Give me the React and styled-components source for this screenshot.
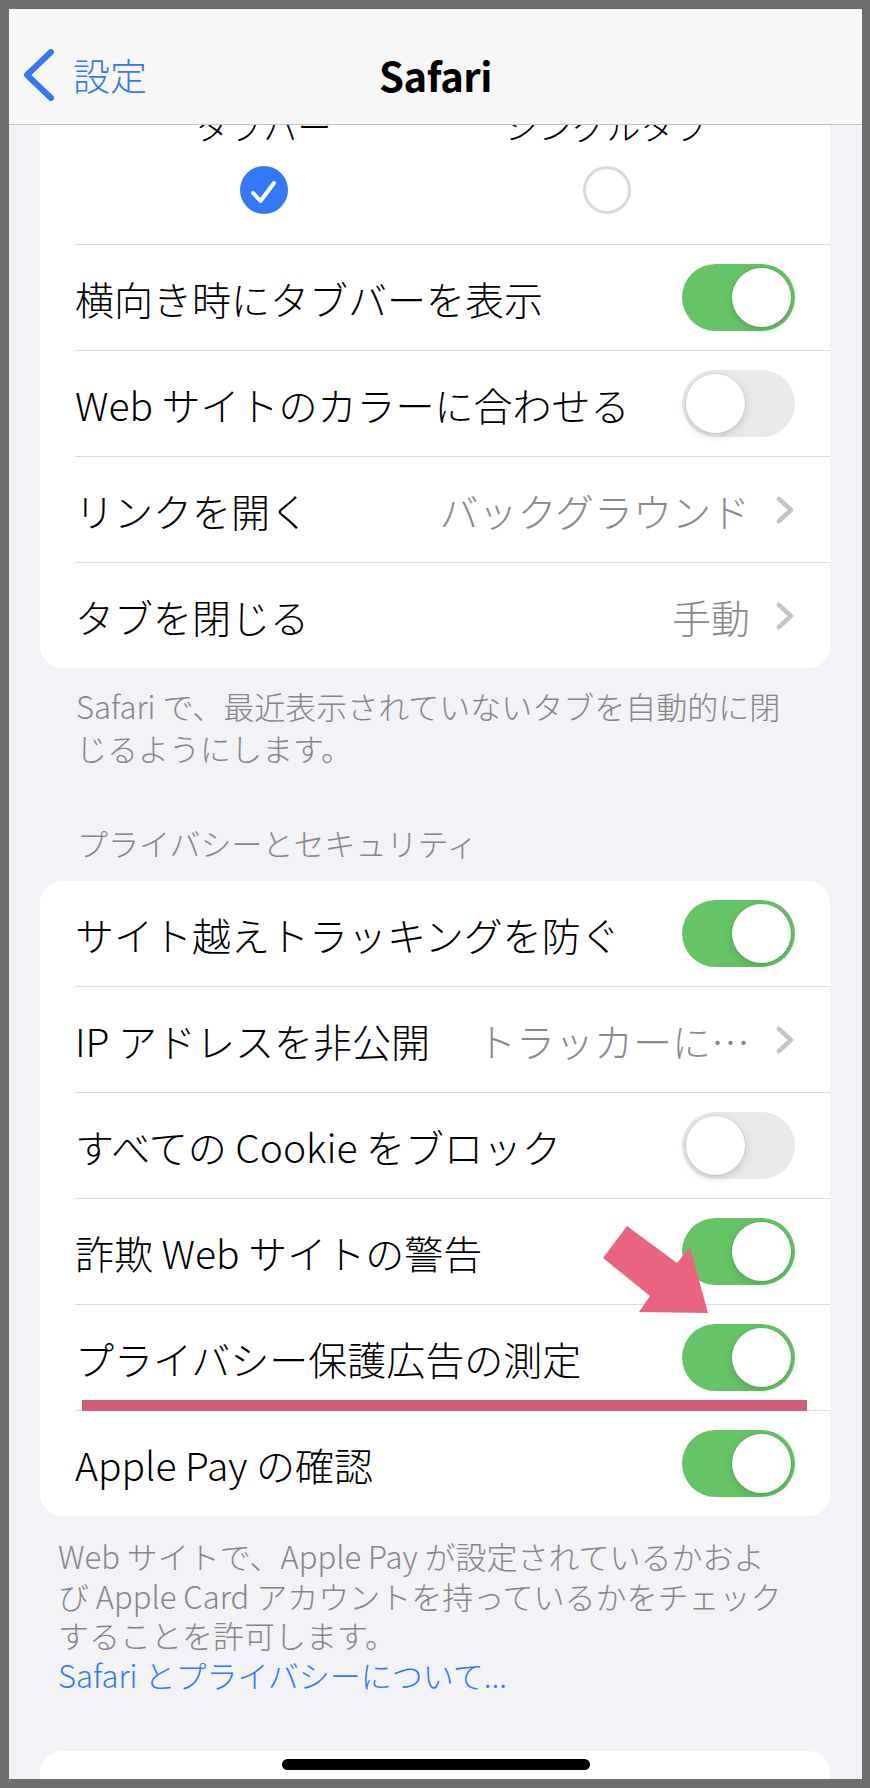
import React from "react";
import styled, { createGlobalStyle } from "styled-components";

const GlobalStyle = createGlobalStyle`
  body {
    margin: 0;
    font-family: "Noto Sans CJK JP", "Noto Sans", sans-serif;
    font-weight: 300;
  }
`;

const Frame = styled.div`
  background: #6d6d6d;
  padding: 9px 8px 9px 9px;
  height: 1788px;
  box-sizing: border-box;
`;

const Screen = styled.div`
  position: relative;
  height: 1770px;
  overflow: hidden;
  background: #f2f2f7;
`;

const NavBar = styled.div`
  height: 116px;
  box-sizing: border-box;
  padding-top: 16px;
  background: #f7f7f7;
  border-bottom: 1px solid #c4c4c7;
  display: grid;
  grid-template-columns: 1fr auto 1fr;
  align-items: center;
`;

const BackButton = styled.div`
  display: flex;
  align-items: center;
  gap: 18px;
  padding-left: 12px;
  color: #3478f6;
  font-size: 37px;
`;

const Title = styled.div`
  font-size: 40px;
  font-weight: 700;
  color: #000;
  letter-spacing: -0.5px;
`;

const Content = styled.div`
  padding: 0 32px 0 31px;
`;

const Card = styled.div`
  position: relative;
  background: #fff;
  border-radius: ${(p) => (p.$clipped ? "0 0 22px 22px" : "22px")};
  overflow: ${(p) => (p.$clipped ? "hidden" : "visible")};
  margin-top: ${(p) => p.$top || 0}px;
`;

const Picker = styled.div`
  display: flex;
  justify-content: center;
  gap: 103px;
  padding-bottom: 30px;
`;

const PickerOption = styled.div`
  width: 240px;
  display: flex;
  flex-direction: column;
  align-items: center;
  gap: 21px;
`;

const PickerLabel = styled.div`
  margin-top: -19px;
  font-size: 34px;
  line-height: 39px;
  color: #000;
  white-space: nowrap;
`;

const Radio = styled.div`
  width: 48px;
  height: 48px;
  border-radius: 50%;
  box-sizing: border-box;
  background: ${(p) => (p.$checked ? "#3478f6" : "#fff")};
  border: ${(p) => (p.$checked ? "none" : "3px solid #dadadd")};
  display: flex;
  align-items: center;
  justify-content: center;
`;

const Row = styled.div`
  height: ${(p) => (p.$first ? 105 : 106)}px;
  box-sizing: border-box;
  margin-left: 35px;
  padding-right: 35px;
  border-top: ${(p) => (p.$first ? "none" : "1px solid #dcdce0")};
  display: flex;
  align-items: center;
  justify-content: space-between;
`;

const Label = styled.div`
  font-size: 39px;
  line-height: 46px;
  color: #000;
  white-space: nowrap;
`;

const Value = styled.div`
  display: flex;
  align-items: center;
  gap: 26px;
  font-size: 39px;
  line-height: 46px;
  color: #8a8a8e;
  white-space: nowrap;
`;

const Track = styled.div`
  width: 113px;
  height: 67px;
  border-radius: 34px;
  background: ${(p) => (p.$on ? "#65c466" : "#e9e9eb")};
  padding: 4px;
  box-sizing: border-box;
  display: flex;
  justify-content: ${(p) => (p.$on ? "flex-end" : "flex-start")};
`;

const Knob = styled.div`
  width: 59px;
  height: 59px;
  border-radius: 50%;
  background: #fff;
  box-shadow: 0 3px 8px rgba(0, 0, 0, 0.15), 0 0 0 1px rgba(0, 0, 0, 0.04);
`;

const Footer = styled.div`
  margin-top: ${(p) => p.$top}px;
  padding-left: ${(p) => p.$indent}px;
  font-size: 31px;
  line-height: ${(p) => p.$lh}px;
  color: #86868a;
  white-space: nowrap;
`;

const SectionHeader = styled.div`
  margin-top: 53px;
  padding-left: 37px;
  font-size: 31px;
  line-height: 42px;
  color: #86868a;
`;

const Link = styled.div`
  color: #3478f6;
`;

const Arrow = styled.svg`
  position: absolute;
  left: 563px;
  top: 345px;
`;

const Underline = styled.div`
  position: absolute;
  left: 42px;
  top: 519px;
  width: 725px;
  height: 11px;
  background: #d15d79;
`;

const BottomCard = styled.div`
  margin-top: 57px;
  height: 120px;
  background: #fff;
  border-radius: 22px;
`;

const HomeIndicator = styled.div`
  position: absolute;
  left: 50%;
  bottom: 9px;
  width: 308px;
  height: 11px;
  margin-left: -154px;
  border-radius: 6px;
  background: #000;
`;

const Chevron = () => (
  <svg width="19" height="28" viewBox="0 0 19 28">
    <path
      d="M3 3 L15 14 L3 25"
      fill="none"
      stroke="#c4c4c7"
      strokeWidth="4.5"
      strokeLinecap="round"
      strokeLinejoin="round"
    />
  </svg>
);

const Toggle = ({ on }) => (
  <Track $on={on}>
    <Knob />
  </Track>
);

const SettingRow = ({ label, value, toggle, first }) => (
  <Row $first={first}>
    <Label>{label}</Label>
    {value !== undefined ? (
      <Value>
        {value}
        <Chevron />
      </Value>
    ) : (
      <Toggle on={toggle} />
    )}
  </Row>
);

const App = () => {
  return (
    <Frame>
      <GlobalStyle />
      <Screen>
        <NavBar>
          <BackButton>
            <svg width="34" height="52" viewBox="0 0 34 52">
              <path
                d="M30 3 L6 26 L30 49"
                fill="none"
                stroke="#3478f6"
                strokeWidth="6"
                strokeLinecap="round"
                strokeLinejoin="round"
              />
            </svg>
            設定
          </BackButton>
          <Title>Safari</Title>
          <div />
        </NavBar>

        <Content>
          <Card $clipped>
            <Picker>
              <PickerOption>
                <PickerLabel>タブバー</PickerLabel>
                <Radio $checked>
                  <svg width="48" height="48" viewBox="0 0 48 48">
                    <path
                      d="M13 27 L20.5 35 L34 17"
                      fill="none"
                      stroke="#fff"
                      strokeWidth="4"
                      strokeLinecap="round"
                      strokeLinejoin="round"
                    />
                  </svg>
                </Radio>
              </PickerOption>
              <PickerOption>
                <PickerLabel>シングルタブ</PickerLabel>
                <Radio />
              </PickerOption>
            </Picker>
            <SettingRow label="横向き時にタブバーを表示" toggle />
            <SettingRow label="Web サイトのカラーに合わせる" toggle={false} />
            <SettingRow label="リンクを開く" value="バックグラウンド" />
            <SettingRow label="タブを閉じる" value="手動" />
          </Card>

          <Footer $top={17} $indent={36} $lh={42}>
            Safari で、最近表示されていないタブを自動的に閉
            <br />
            じるようにします。
          </Footer>

          <SectionHeader>プライバシーとセキュリティ</SectionHeader>

          <Card $top={17}>
            <SettingRow first label="サイト越えトラッキングを防ぐ" toggle />
            <SettingRow label="IP アドレスを非公開" value="トラッカーに…" />
            <SettingRow label="すべての Cookie をブロック" toggle={false} />
            <SettingRow label="詐欺 Web サイトの警告" toggle />
            <SettingRow label="プライバシー保護広告の測定" toggle />
            <SettingRow label="Apple Pay の確認" toggle />
            <Arrow width="106" height="88" viewBox="0 0 106 88">
              <polygon
                points="24,0 74,37 87,21 105,87 36,86 47,70 0,32"
                fill="#e9657f"
              />
            </Arrow>
            <Underline />
          </Card>

          <Footer $top={20} $indent={18} $lh={39.5}>
            Web サイトで、Apple Pay が設定されているかおよ
            <br />
            び Apple Card アカウントを持っているかをチェック
            <br />
            することを許可します。
            <Link>Safari とプライバシーについて...</Link>
          </Footer>

          <BottomCard />
        </Content>
        <HomeIndicator />
      </Screen>
    </Frame>
  );
};

export default App;
